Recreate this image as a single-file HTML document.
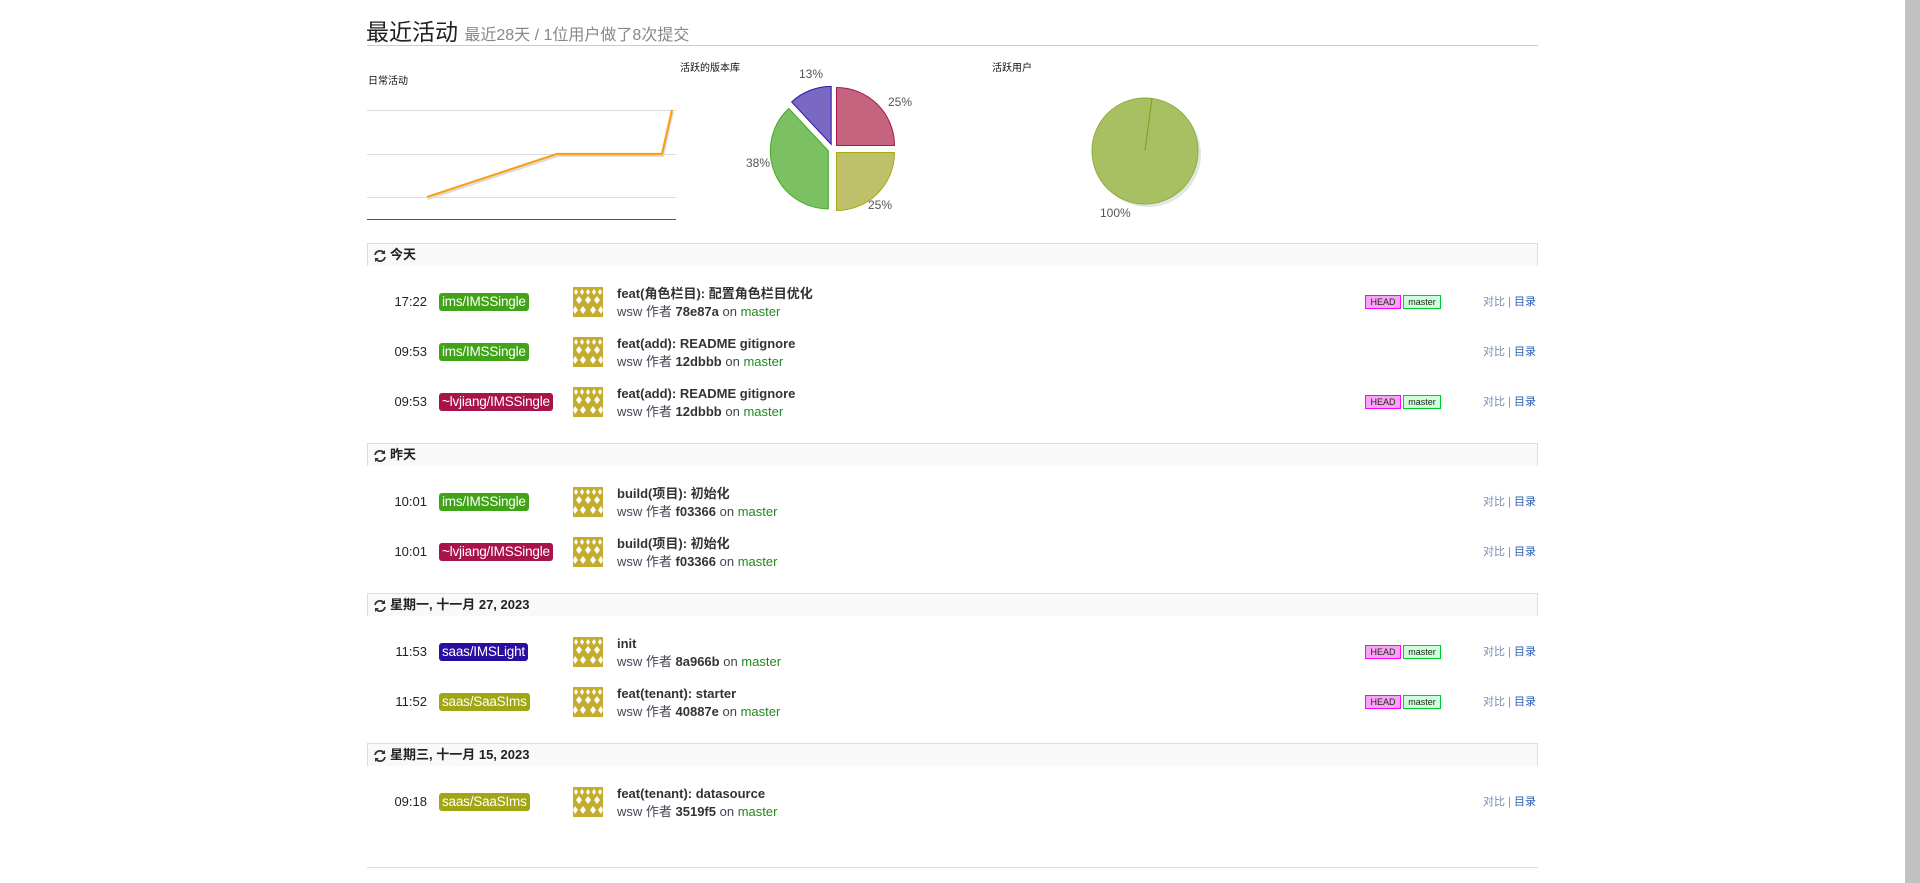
<!DOCTYPE html>
<html><head><meta charset="utf-8"><style>
*{margin:0;padding:0;box-sizing:border-box}
body{width:1920px;height:883px;background:#fff;font-family:"Liberation Sans","Noto Sans CJK SC",sans-serif;position:relative;overflow:hidden;color:#222}
.a{position:absolute;white-space:nowrap}
.hdr{position:absolute;left:367px;width:1171px;height:23px;background:#f9f9f9;border:1px solid #ddd;border-bottom:none;font-size:13px;font-weight:bold;line-height:22px;padding-left:22px}
.hdr svg{position:absolute;left:5px;top:5px}
.row{position:absolute;left:0;width:1920px;height:40px}
.t{position:absolute;right:1493px;top:-8px;font-size:13px;color:#222;line-height:16px}
.b{position:absolute;left:439px;top:-9px;height:18px;line-height:18px;padding:0 3px;border-radius:3px;color:#fff;font-size:13.5px;letter-spacing:-0.2px}
.av{position:absolute;left:573px;top:-15px;width:30px;height:30px}
.c1{position:absolute;left:617px;top:-16px;font-size:13px;font-weight:bold;color:#333;line-height:16px}
.c2{position:absolute;left:617px;top:2px;font-size:13px;color:#445;line-height:16px}
.c2 b{color:#333}.c2 .m{color:#1e8a1e}
.hd{position:absolute;left:1365px;top:-7px;width:36px;height:14px;border:1px solid #f0f;background:#f9a3f4;font-size:9px;line-height:12px;text-align:center;color:#222}
.ms{position:absolute;left:1403px;top:-7px;width:38px;height:14px;border:1px solid #0c3;background:#cfffd8;font-size:9px;line-height:12px;text-align:center;color:#222}
.ln{position:absolute;left:1483px;top:-7px;font-size:11px;line-height:14px;color:#7a8db0}
.ln span{color:#2a5db0}
</style></head><body>
<svg width="0" height="0" style="position:absolute"><defs>
<g id="av"><rect width="30" height="30" fill="#c4ad2e"/>
<g fill="#fff"><path d="M3 2l2 3-2 3-2-3zM9 2l2 3-2 3-2-3zM15 2l2 3-2 3-2-3zM21 2l2 3-2 3-2-3zM27 2l2 3-2 3-2-3z"/>
<path d="M6 9l3 4-3 4-3-4zM15 9l3 4-3 4-3-4zM24 9l3 4-3 4-3-4z"/>
<path d="M2 19l3 4 -3 4-2-4zM10 19l3 4-3 4-3-4zM20 19l3 4-3 4-3-4zM28 19l2 4-2 4-3-4z"/></g></g>
<g id="rf"><path d="M2 6a5 5 0 0 1 9-2M12 8a5 5 0 0 1-9 2" fill="none" stroke="#333" stroke-width="1.8"/><path d="M12 1v4h-4zM2 13v-4h4z" fill="#333"/></g>
</defs></svg>

<div class="a" style="left:366px;top:13px;font-size:23px;color:#222">最近活动 <span style="font-size:16px;color:#888">最近28天 / 1位用户做了8次提交</span></div>
<div class="a" style="left:367px;top:45px;width:1171px;height:1px;background:#ccc"></div>

<div class="a" style="left:368px;top:72px;font-size:10px;color:#111">日常活动</div>
<div class="a" style="left:680px;top:59px;font-size:10px;color:#111">活跃的版本库</div>
<div class="a" style="left:992px;top:59px;font-size:10px;color:#111">活跃用户</div>

<svg class="a" style="left:0;top:0" width="1400" height="240">
<g stroke="#ddd" stroke-width="1"><line x1="367" y1="110.5" x2="676" y2="110.5"/><line x1="367" y1="154.5" x2="676" y2="154.5"/><line x1="367" y1="197.5" x2="676" y2="197.5"/></g>
<line x1="367" y1="219.5" x2="676" y2="219.5" stroke="#555"/>
<polyline points="428,199 558,156 663,156 673,112" fill="none" stroke="#ddd" stroke-width="2"/>
<polyline points="427,197 557,154 662,154 672,110" fill="none" stroke="#f7a01a" stroke-width="2.2"/>
<g stroke-width="1">
<path d="M836.5,145.5 L836.5,87.5 A58,58 0 0 1 894.5,145.5 Z" fill="#c4647e" stroke="#a8184a"/>
<path d="M836.5,152.5 L894.5,152.5 A58,58 0 0 1 836.5,210.5 Z" fill="#bec06a" stroke="#a8a818"/>
<path d="M828.35,150.83 L828.35,208.83 A58,58 0 0 1 788.8,108.4 Z" fill="#7cc064" stroke="#48a828"/>
<path d="M831.2,144.35 L791.6,101.95 A58,58 0 0 1 831.2,86.35 Z" fill="#7a68c4" stroke="#3018a8"/>
</g>
<g font-size="12" fill="#555" font-family="Liberation Sans,sans-serif">
<text x="799" y="78">13%</text><text x="888" y="106">25%</text><text x="746" y="167">38%</text><text x="868" y="209">25%</text><text x="1100" y="217">100%</text></g>
<circle cx="1148" cy="154" r="53" fill="#e4e4e4"/>
<circle cx="1145" cy="151" r="53" fill="#a8c062" stroke="#8aae3a"/>
<line x1="1145" y1="151" x2="1152" y2="98" stroke="#78a020"/>
</svg>

<div class="hdr" style="top:243px"><svg width="14" height="14"><use href="#rf"/></svg>今天</div>
<div class="hdr" style="top:443px"><svg width="14" height="14"><use href="#rf"/></svg>昨天</div>
<div class="hdr" style="top:593px"><svg width="14" height="14"><use href="#rf"/></svg>星期一, 十一月 27, 2023</div>
<div class="hdr" style="top:743px"><svg width="14" height="14"><use href="#rf"/></svg>星期三, 十一月 15, 2023</div>

<div class="row" style="top:302px"><div class="t">17:22</div><div class="b" style="background:#41a317">ims/IMSSingle</div><svg class="av"><use href="#av"/></svg><div class="c1">feat(角色栏目): 配置角色栏目优化</div><div class="c2">wsw 作者 <b>78e87a</b> on <span class="m">master</span></div><div class="hd">HEAD</div><div class="ms">master</div><div class="ln">对比 | <span>目录</span></div></div>
<div class="row" style="top:352px"><div class="t">09:53</div><div class="b" style="background:#41a317">ims/IMSSingle</div><svg class="av"><use href="#av"/></svg><div class="c1">feat(add): README gitignore</div><div class="c2">wsw 作者 <b>12dbbb</b> on <span class="m">master</span></div><div class="ln">对比 | <span>目录</span></div></div>
<div class="row" style="top:402px"><div class="t">09:53</div><div class="b" style="background:#a8134a">~lvjiang/IMSSingle</div><svg class="av"><use href="#av"/></svg><div class="c1">feat(add): README gitignore</div><div class="c2">wsw 作者 <b>12dbbb</b> on <span class="m">master</span></div><div class="hd">HEAD</div><div class="ms">master</div><div class="ln">对比 | <span>目录</span></div></div>

<div class="row" style="top:502px"><div class="t">10:01</div><div class="b" style="background:#41a317">ims/IMSSingle</div><svg class="av"><use href="#av"/></svg><div class="c1">build(项目): 初始化</div><div class="c2">wsw 作者 <b>f03366</b> on <span class="m">master</span></div><div class="ln">对比 | <span>目录</span></div></div>
<div class="row" style="top:552px"><div class="t">10:01</div><div class="b" style="background:#a8134a">~lvjiang/IMSSingle</div><svg class="av"><use href="#av"/></svg><div class="c1">build(项目): 初始化</div><div class="c2">wsw 作者 <b>f03366</b> on <span class="m">master</span></div><div class="ln">对比 | <span>目录</span></div></div>

<div class="row" style="top:652px"><div class="t">11:53</div><div class="b" style="background:#2a0ea0">saas/IMSLight</div><svg class="av"><use href="#av"/></svg><div class="c1">init</div><div class="c2">wsw 作者 <b>8a966b</b> on <span class="m">master</span></div><div class="hd">HEAD</div><div class="ms">master</div><div class="ln">对比 | <span>目录</span></div></div>
<div class="row" style="top:702px"><div class="t">11:52</div><div class="b" style="background:#a0a614">saas/SaaSIms</div><svg class="av"><use href="#av"/></svg><div class="c1">feat(tenant): starter</div><div class="c2">wsw 作者 <b>40887e</b> on <span class="m">master</span></div><div class="hd">HEAD</div><div class="ms">master</div><div class="ln">对比 | <span>目录</span></div></div>

<div class="row" style="top:802px"><div class="t">09:18</div><div class="b" style="background:#a0a614">saas/SaaSIms</div><svg class="av"><use href="#av"/></svg><div class="c1">feat(tenant): datasource</div><div class="c2">wsw 作者 <b>3519f5</b> on <span class="m">master</span></div><div class="ln">对比 | <span>目录</span></div></div>

<div class="a" style="left:367px;top:867px;width:1171px;height:1px;background:#ddd"></div>
<div class="a" style="left:1905px;top:0;width:15px;height:883px;background:#c1c1c1"></div>
</body></html>
